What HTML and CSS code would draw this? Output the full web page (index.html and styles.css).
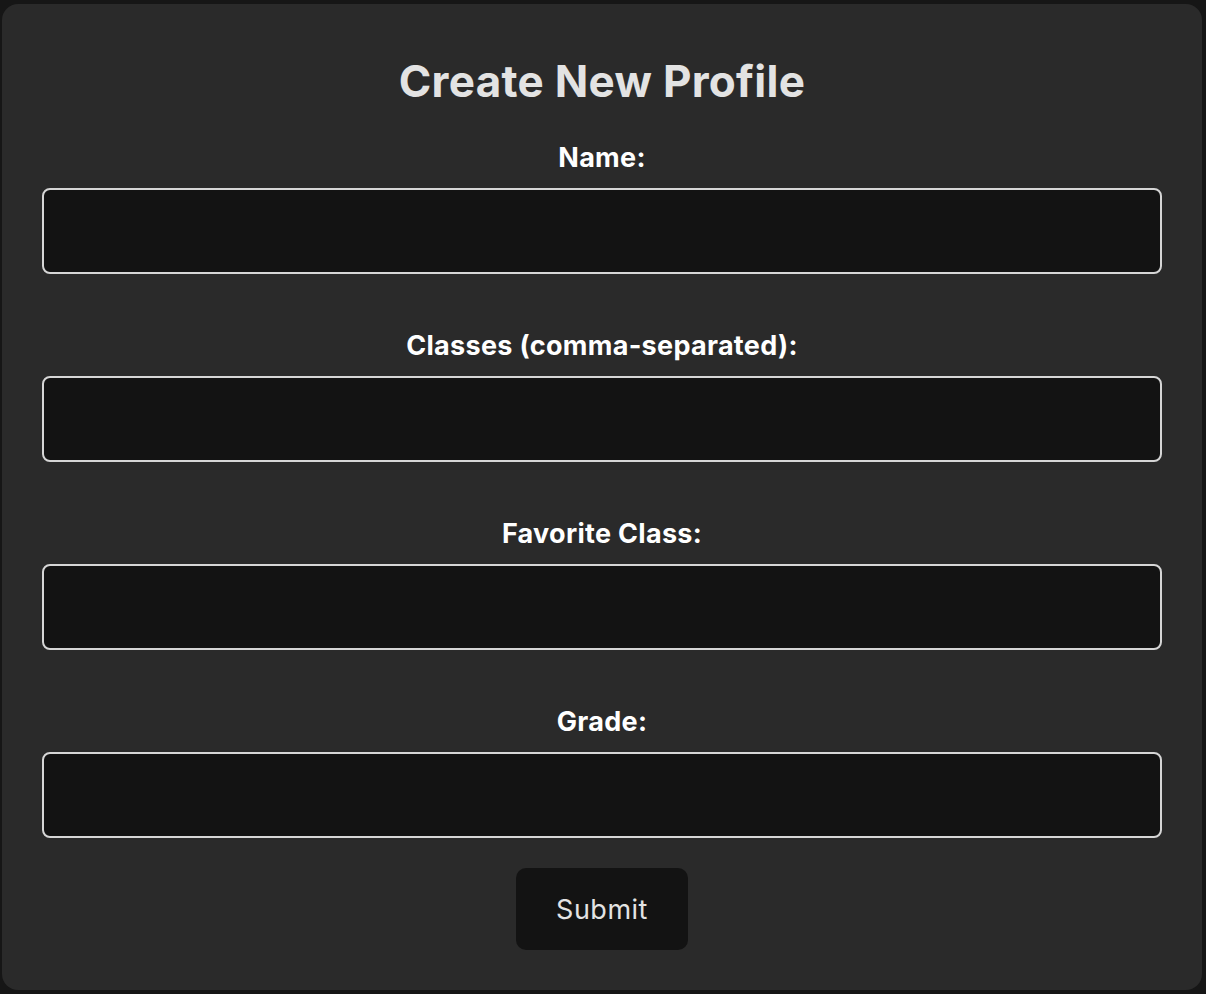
FILE: index.html
```html
<!DOCTYPE html>
<html lang="en">
<head>
<meta charset="utf-8">
<title>Create New Profile</title>
<link rel="stylesheet" href="styles.css">
</head>
<body>
<main class="card">
  <h1 class="title">Create New Profile</h1>
  <form class="form">
    <div class="field">
      <label class="label" for="name">Name:</label>
      <input class="input" id="name" type="text">
    </div>
    <div class="field">
      <label class="label" for="classes">Classes (comma-separated):</label>
      <input class="input" id="classes" type="text">
    </div>
    <div class="field">
      <label class="label" for="fav">Favorite Class:</label>
      <input class="input" id="fav" type="text">
    </div>
    <div class="field">
      <label class="label" for="grade">Grade:</label>
      <input class="input" id="grade" type="text">
    </div>
    <button class="submit" type="button">Submit</button>
  </form>
</main>
</body>
</html>
```
FILE: styles.css
```css
html, body {
  margin: 0;
  padding: 0;
  background: #161616;
}
body {
  padding: 4px 4px 4px 2px;
  font-family: Inter, "Noto Sans", sans-serif;
}
.card {
  width: 1200px;
  height: 986px;
  box-sizing: border-box;
  background: #2a2a2a;
  border-radius: 16px;
  padding: 52px 40px 0;
}
.title {
  margin: 0;
  text-align: center;
  color: #e3e3e3;
  font-size: 44px;
  letter-spacing: 0.3px;
  font-weight: 700;
  line-height: 50px;
}
.form {
  display: flex;
  flex-direction: column;
  align-items: center;
  margin-top: 37px;
}
.field {
  width: 100%;
  display: flex;
  flex-direction: column;
  align-items: center;
}
.field + .field {
  margin-top: 57px;
}
.label {
  color: #ffffff;
  font-size: 27px;
  letter-spacing: 0.3px;
  font-weight: 700;
  line-height: 30px;
  margin-bottom: 15px;
}
.input {
  width: 100%;
  height: 86px;
  box-sizing: border-box;
  background: #131313;
  border: 2px solid #d6d6d6;
  border-radius: 8px;
  color: #fff;
  font-family: inherit;
  font-size: 24px;
  padding: 0 16px;
  margin: 0;
}
.submit {
  margin-top: 30px;
  width: 172px;
  height: 82px;
  background: #131313;
  border: none;
  border-radius: 10px;
  color: #e3e3e3;
  font-family: inherit;
  font-size: 27px;
  letter-spacing: 0.5px;
  font-weight: 400;
}
```
